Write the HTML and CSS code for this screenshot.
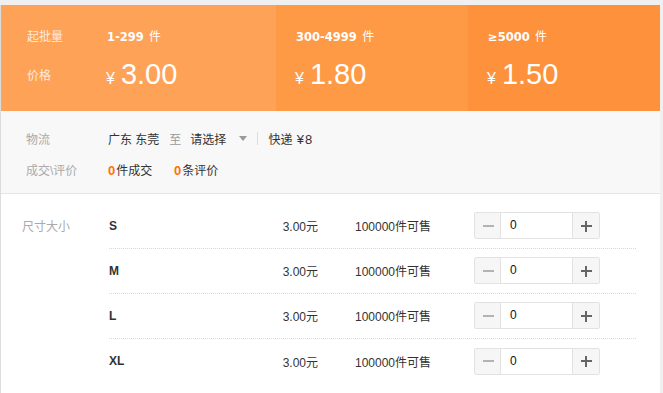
FILE: index.html
```html
<!DOCTYPE html>
<html lang="zh">
<head>
<meta charset="utf-8">
<title>批发价格</title>
<link rel="stylesheet" href="styles.css">
</head>
<body>
<div class="panel">
  <div class="tiers">
    <div class="tier tier-1">
      <div class="tier-row"><span class="tier-label">起批量</span><span class="qty"><b>1-299</b> 件</span></div>
      <div class="tier-row price-row"><span class="tier-label">价格</span><span class="price"><span class="yen">¥</span>3.00</span></div>
    </div>
    <div class="tier tier-2">
      <div class="tier-row"><span class="qty"><b>300-4999</b> 件</span></div>
      <div class="tier-row price-row"><span class="price"><span class="yen">¥</span>1.80</span></div>
    </div>
    <div class="tier tier-3">
      <div class="tier-row"><span class="qty"><b>≥5000</b> 件</span></div>
      <div class="tier-row price-row"><span class="price"><span class="yen">¥</span>1.50</span></div>
    </div>
  </div>

  <div class="info">
    <div class="info-row">
      <span class="info-label">物流</span>
      <span class="from">广东 东莞</span>
      <span class="to">至</span>
      <span class="select">请选择<span class="caret"></span></span>
      <span class="sep"></span>
      <span class="ship">快递 <span class="fee">¥8</span></span>
    </div>
    <div class="info-row">
      <span class="info-label">成交\评价</span>
      <span class="stat"><b>0</b>件成交</span>
      <span class="stat"><b>0</b>条评价</span>
    </div>
  </div>

  <div class="sku">
    <div class="sku-label">尺寸大小</div>
    <div class="sku-list">
      <div class="sku-row">
        <span class="sku-name">S</span>
        <span class="sku-price">3.00元</span>
        <span class="sku-stock">100000件可售</span>
        <div class="stepper"><span class="btn minus"></span><span class="val">0</span><span class="btn plus"></span></div>
      </div>
      <div class="sku-row">
        <span class="sku-name">M</span>
        <span class="sku-price">3.00元</span>
        <span class="sku-stock">100000件可售</span>
        <div class="stepper"><span class="btn minus"></span><span class="val">0</span><span class="btn plus"></span></div>
      </div>
      <div class="sku-row">
        <span class="sku-name">L</span>
        <span class="sku-price">3.00元</span>
        <span class="sku-stock">100000件可售</span>
        <div class="stepper"><span class="btn minus"></span><span class="val">0</span><span class="btn plus"></span></div>
      </div>
      <div class="sku-row">
        <span class="sku-name">XL</span>
        <span class="sku-price">3.00元</span>
        <span class="sku-stock">100000件可售</span>
        <div class="stepper"><span class="btn minus"></span><span class="val">0</span><span class="btn plus"></span></div>
      </div>
    </div>
  </div>
</div>
</body>
</html>
```

FILE: styles.css
```css
* { box-sizing: border-box; }
html, body { margin: 0; padding: 0; }
body {
  background: #f0f0f0;
  padding-top: 5px;
  font-family: "Liberation Sans", "Noto Sans CJK SC", sans-serif;
  font-size: 12px;
  color: #333;
}
.panel {
  width: 660px;
  border-left: 1px solid #dcdcdc;
  background: #fff;
  min-height: 400px;
}
.tiers {
  display: flex;
  height: 106px;
}
.tier {
  padding-top: 15px;
  padding-left: 20px;
  color: #fff;
}
.tier-1 { width: 275px; background: #fea257; padding-left: 26px; }
.tier-2 { width: 192px; background: #fe9a45; }
.tier-3 { width: 192px; background: #fe913b; }
.tier-row {
  display: flex;
  align-items: center;
  height: 30px;
}
.price-row { height: 48px; }
.tier-label {
  width: 80px;
  color: #fde9dc;
  font-size: 12px;
}
.qty { font-size: 12px; }
.qty b {
  font-family: "DejaVu Sans", sans-serif;
  font-size: 11.5px;
  font-weight: bold;
  margin-right: 2px;
}
.price {
  font-size: 29px;
  line-height: 1;
  display: flex;
  align-items: baseline;
  margin-left: -1px;
}
.yen {
  font-size: 16px;
  margin-right: 6px;
}
.info {
  background: #f8f8f8;
  border-bottom: 1px solid #e6e6e6;
  padding: 12px 0 8px 25px;
}
.info-row {
  display: flex;
  align-items: center;
  height: 31px;
}
.info-label {
  width: 82px;
  color: #aaa;
}
.from { color: #333; }
.to { color: #999; margin-left: 10px; }
.select {
  margin-left: 9px;
  display: flex;
  align-items: center;
}
.caret {
  width: 0;
  height: 0;
  border-left: 4px solid transparent;
  border-right: 4px solid transparent;
  border-top: 5px solid #999;
  margin-left: 13px;
}
.sep {
  width: 1px;
  height: 13px;
  background: #ddd;
  margin-left: 10px;
}
.ship { margin-left: 10px; }
.fee { font-size: 13px; letter-spacing: 1px; margin-left: 1px; }
.stat { width: 66px; }
.stat b { color: #ff7300; font-weight: bold; font-size: 13px; margin-right: 1px; }
.sku {
  display: flex;
  padding-top: 10px;
}
.sku-label {
  width: 108px;
  padding-left: 21px;
  color: #aaa;
  line-height: 46px;
}
.sku-list { width: 527px; }
.sku-row {
  display: flex;
  align-items: center;
  height: 45px;
  padding-bottom: 1px;
  border-bottom: 1px dotted #d8d8d8;
}
.sku-row:last-child { border-bottom: none; }
.sku-name {
  width: 120px;
  font-weight: bold;
  color: #333;
}
.sku-price {
  width: 89px;
  text-align: right;
  color: #333;
}
.sku-stock {
  width: 119px;
  margin-left: 37px;
  color: #333;
}
.stepper {
  display: flex;
  width: 126px;
  height: 27px;
  border: 1px solid #e2e2e2;
  border-radius: 2px;
}
.btn {
  width: 26px;
  background: #f6f6f6;
  position: relative;
}
.minus { border-right: 1px solid #e2e2e2; }
.plus { border-left: 1px solid #e2e2e2; width: 27px; }
.minus::before, .plus::before, .plus::after {
  content: "";
  position: absolute;
  left: 50%;
  top: 50%;
}
.minus::before {
  width: 11px; height: 2px; margin: -1px 0 0 -5px; background: #b3b3b3;
}
.plus::before {
  width: 11px; height: 2px; margin: -1px 0 0 -5px; background: #666;
}
.plus::after {
  width: 2px; height: 11px; margin: -5px 0 0 -1px; background: #666;
}
.val {
  flex: 1;
  background: #fff;
  line-height: 25px;
  padding-left: 9px;
  color: #111;
}
```
